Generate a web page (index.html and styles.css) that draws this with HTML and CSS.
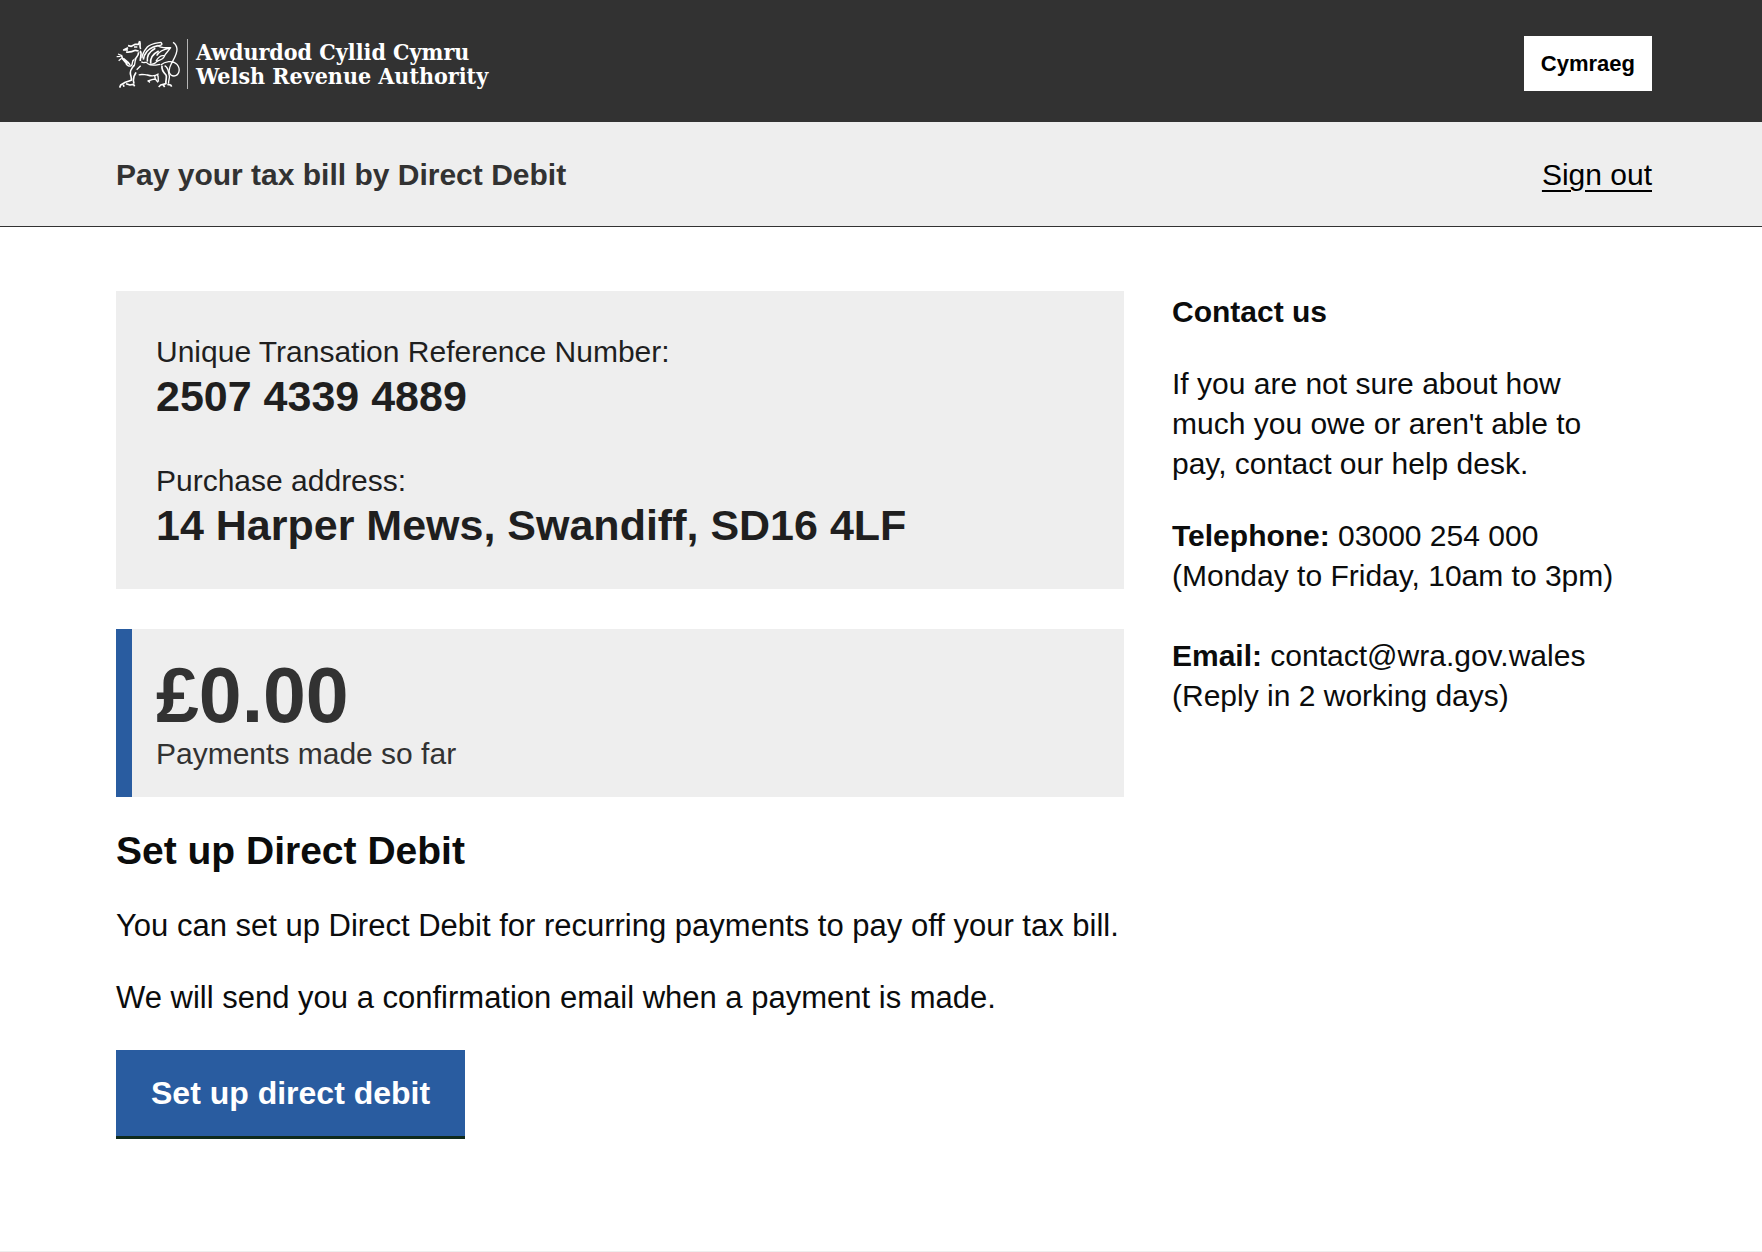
FILE: index.html
```html
<!DOCTYPE html>
<html lang="en">
<head>
<meta charset="utf-8">
<meta name="viewport" content="width=device-width, initial-scale=1">
<title>Pay your tax bill by Direct Debit</title>
<link rel="stylesheet" href="styles.css">
</head>
<body>
<header class="masthead">
  <div class="container masthead-inner">
    <a class="logo" href="#">
      <svg class="dragon" viewBox="30 30 195 150" aria-hidden="true">
        <g class="dragon-thick">
          <path d="M101 36L98 46L88 46L76 52L66 50M66 56L53 63L66 63M60 69C72 71 80 68 88 64L98 66"/>
          <path d="M101 38C105 48 99 52 104 60M98 70C98 80 92 84 86 92M84 54L94 54"/>
          <path d="M46 78L50 90L64 106M52 88L66 100L72 108"/>
          <path d="M84 108C80 116 72 122 73 132C73 140 78 146 76 154L58 160L44 168L41 176M52 167L54 173M60 164L72 168L82 166L86 172"/>
          <path d="M102 66C110 72 102 82 103 96M90 130L84 142L82 154L84 164"/>
          <path d="M168 110C166 122 172 130 180 138C184 144 178 152 180 164L164 168L158 174M172 168L176 174M184 166L194 168L197 173"/>
          <path d="M112 92C114 76 122 62 142 54L156 50M124 98C122 84 130 68 148 58M134 104C132 88 138 76 158 66"/>
        </g>
        <g class="dragon-thin">
          <path d="M32 83L44 82M36 75L46 79M38 95L47 88"/>
          <path d="M84 92C76 96 82 104 76 110C68 114 62 108 60 104M90 90C84 98 90 106 82 114"/>
          <path d="M156 50C166 50 172 46 164 40C152 42 132 44 124 54C114 66 108 76 108 88M156 50C162 58 178 56 194 56C188 66 178 72 174 84C170 94 158 92 152 98C148 104 140 106 132 106M190 58C176 60 160 64 152 80M174 80C164 78 156 86 150 96"/>
          <path d="M106 98C116 106 118 94 126 104C136 112 150 108 162 106M98 138C108 134 116 138 124 138C136 142 150 140 158 134"/>
          <path d="M92 122L104 110M176 110C190 118 186 130 190 140C192 148 186 154 188 164"/>
          <path d="M146 140L148 150L138 152L126 156L132 160M148 150L156 160M154 138C160 144 154 150 158 158"/>
          <path d="M164 108C176 98 200 92 213 106C226 122 218 140 204 141C190 141 187 128 191 116C196 98 214 80 213 60C212 50 208 44 201 40"/>
        </g>
      </svg>
      <span class="logo-rule"></span>
      <span class="logo-text"><span lang="cy">Awdurdod Cyllid Cymru</span><span>Welsh Revenue Authority</span></span>
    </a>
    <button class="language" type="button" lang="cy">Cymraeg</button>
  </div>
</header>
<div class="service">
  <div class="container service-inner">
    <span class="service-name">Pay your tax bill by Direct Debit</span>
    <a class="sign-out" href="#">Sign out</a>
  </div>
</div>
<main class="container columns">
  <div class="content">
    <dl class="panel summary">
      <div>
        <dt>Unique Transation Reference Number:</dt>
        <dd>2507 4339 4889</dd>
      </div>
      <div>
        <dt>Purchase address:</dt>
        <dd>14 Harper Mews, Swandiff, SD16 4LF</dd>
      </div>
    </dl>
    <div class="panel total">
      <p class="amount">£0.00</p>
      <p class="amount-label">Payments made so far</p>
    </div>
    <h1>Set up Direct Debit</h1>
    <p>You can set up Direct Debit for recurring payments to pay off your tax bill.</p>
    <p>We will send you a confirmation email when a payment is made.</p>
    <button class="primary" type="button">Set up direct debit</button>
  </div>
  <aside class="contact">
    <h2>Contact us</h2>
    <p>If you are not sure about how much you owe or aren't able to pay, contact our help desk.</p>
    <p><strong>Telephone:</strong> 03000 254 000<br>(Monday to Friday, 10am to 3pm)<br><br><strong>Email:</strong> contact@wra.gov.wales<br>(Reply in 2 working days)</p>
  </aside>
</main>
<footer class="footer"></footer>
</body>
</html>
```
FILE: styles.css
```css
* {
  box-sizing: border-box;
}

body {
  display: flex;
  flex-direction: column;
  min-height: 100vh;
  margin: 0;
  background: #fff;
  color: #0b0c0c;
  font: 30px/40px "Liberation Sans", Arial, sans-serif;
}

h1,
h2,
p,
dl,
dd {
  margin: 0;
}

.container {
  width: 100%;
  padding: 0 110px 0 116px;
}

.masthead {
  background: #323232;
}

.masthead-inner,
.service-inner {
  display: flex;
  align-items: center;
  justify-content: space-between;
}

.masthead-inner {
  padding-top: 36px;
  padding-bottom: 31px;
}

.logo {
  display: flex;
  align-items: center;
  gap: 6px;
  color: #fff;
  text-decoration: none;
}

.dragon {
  width: 65px;
  height: 50px;
  fill: none;
  stroke: #fff;
  stroke-linejoin: round;
}

.dragon-thick {
  stroke-width: 5;
}

.dragon-thin {
  stroke-width: 4;
}

.logo-rule {
  width: 1px;
  height: 50px;
  background: #b5b5b5;
}

.logo-text {
  display: grid;
  padding-left: 2px;
  font: bold 23px/24px "DejaVu Serif Condensed", "DejaVu Serif", serif;
}

.language {
  height: 55px;
  padding: 0 17px;
  border: 0;
  background: #fff;
  color: #000;
  font: bold 22px/28px "Liberation Sans", Arial, sans-serif;
}

.service {
  border-bottom: 1px solid #323232;
  background: #eee;
}

.service-inner {
  padding-top: 33px;
  padding-bottom: 31px;
}

.service-name {
  color: #323232;
  font-weight: bold;
}

.sign-out {
  color: #000;
  text-decoration-thickness: 2px;
  text-underline-offset: 5px;
}

.columns {
  display: grid;
  grid-template-columns: 21fr 10fr;
  gap: 48px;
  flex: 1;
  padding-top: 64px;
  padding-bottom: 64px;
}

.panel {
  background: #eee;
}

.summary {
  display: grid;
  gap: 40px;
  margin-bottom: 40px;
  padding: 41px 40px 39px;
  color: #1f1f1f;
}

.summary dd {
  font-size: 43px;
  font-weight: bold;
  line-height: 49px;
}

.total {
  margin-bottom: 32px;
  padding: 30px 24px 23px;
  border-left: 16px solid #295ca0;
  color: #323232;
}

.amount {
  margin-bottom: 3px;
  font-size: 77px;
  font-weight: bold;
  line-height: 72px;
}

h1 {
  margin-bottom: 33px;
  font-size: 39px;
  line-height: 44px;
}

.content > p {
  margin-bottom: 32px;
  font-size: 31px;
}

.primary {
  height: 86px;
  padding: 0 35px;
  border: 0;
  background: #295ca0;
  box-shadow: 0 3px 0 #0f2a1c;
  color: #fff;
  font: bold 32px/40px "Liberation Sans", Arial, sans-serif;
}

.contact {
  padding: 1px 24px 0 0;
}

.contact h2 {
  margin-bottom: 32px;
  font-size: 30px;
}

.contact p {
  margin-bottom: 32px;
}

.footer {
  border-top: 1px solid #eee;
}
```
